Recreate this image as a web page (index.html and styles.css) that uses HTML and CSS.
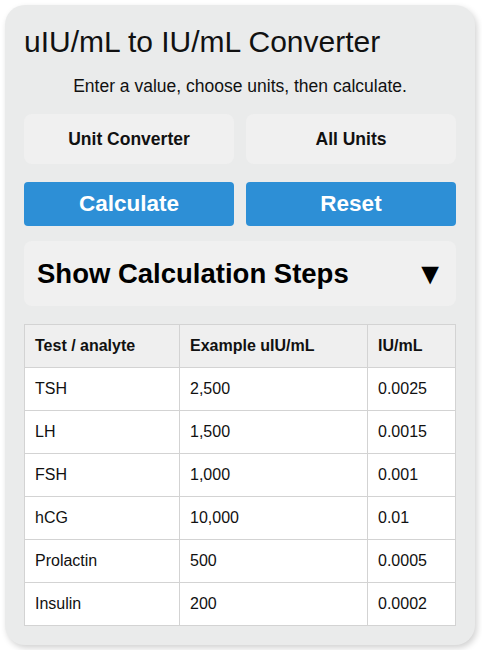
FILE: index.html
```html
<!DOCTYPE html>
<html>
  <head>
    <meta charset="utf-8">
    <title>uIU/mL to IU/mL Converter</title>
    <link rel="stylesheet" href="styles.css">
  </head>
  <body>
    <main class="card">
      <h1 class="title">uIU/mL to IU/mL Converter</h1>
      <p class="intro">Enter a value, choose units, then calculate.</p>
      <div class="tabs">
        <button class="tab">Unit Converter</button>
        <button class="tab">All Units</button>
      </div>
      <div class="actions">
        <button class="action">Calculate</button>
        <button class="action">Reset</button>
      </div>
      <div class="steps">
        <span class="steps-label">Show Calculation Steps</span>
        <span class="steps-arrow">&#9660;</span>
      </div>
      <table class="examples">
        <thead>
          <tr>
            <th class="col-test">Test / analyte</th>
            <th class="col-example">Example uIU/mL</th>
            <th>IU/mL</th>
          </tr>
        </thead>
        <tbody>
          <tr><td>TSH</td><td>2,500</td><td>0.0025</td></tr>
          <tr><td>LH</td><td>1,500</td><td>0.0015</td></tr>
          <tr><td>FSH</td><td>1,000</td><td>0.001</td></tr>
          <tr><td>hCG</td><td>10,000</td><td>0.01</td></tr>
          <tr><td>Prolactin</td><td>500</td><td>0.0005</td></tr>
          <tr><td>Insulin</td><td>200</td><td>0.0002</td></tr>
        </tbody>
      </table>
    </main>
  </body>
</html>
```

FILE: styles.css
```css
body {
  margin: 0;
  padding: 0;
  background-color: #fff;
  font-family: "Liberation Sans", Arial, sans-serif;
  color: #111;
}

.card {
  box-sizing: border-box;
  width: 470px;
  margin: 5px;
  padding: 19px 19px 19px;
  border-radius: 20px;
  background-color: #eaebeb;
  box-shadow: 2px 3px 6px hsla(0, 0%, 0%, 0.18);
}

.title {
  margin: 2px 0 0;
  font-size: 30px;
  line-height: 32px;
  font-weight: normal;
}

.intro {
  margin: 17px 0 0;
  font-size: 17.5px;
  line-height: 22px;
  text-align: center;
}

.tabs,
.actions {
  display: flex;
  gap: 12px;
}

.tabs {
  margin-top: 17px;
}

.tab {
  flex: 1;
  height: 50px;
  border: 0;
  border-radius: 8px;
  background-color: #f0f0f0;
  font-family: inherit;
  font-size: 17.5px;
  font-weight: bold;
  color: #111;
}

.actions {
  margin-top: 18px;
}

.action {
  flex: 1;
  height: 44px;
  border: 0;
  border-radius: 4px;
  background-color: #2d8fd6;
  font-family: inherit;
  font-size: 22.5px;
  font-weight: bold;
  color: #fff;
}

.steps {
  display: flex;
  justify-content: space-between;
  align-items: center;
  height: 65px;
  margin-top: 15px;
  padding: 0 11px 0 13px;
  border-radius: 8px;
  background-color: #f0f0f0;
  font-size: 27.5px;
  font-weight: bold;
  color: #000;
}

.steps-arrow {
  font-size: 30px;
}

.examples {
  width: 100%;
  margin-top: 18px;
  border-collapse: collapse;
  font-size: 16px;
  background-color: #fff;
}

.examples th,
.examples td {
  height: 42px;
  padding: 0 10px;
  border: 1px solid #d3d3d3;
  text-align: left;
}

.examples th {
  background-color: #efefef;
}

.col-test {
  width: 134px;
}

.col-example {
  width: 167px;
}
```
